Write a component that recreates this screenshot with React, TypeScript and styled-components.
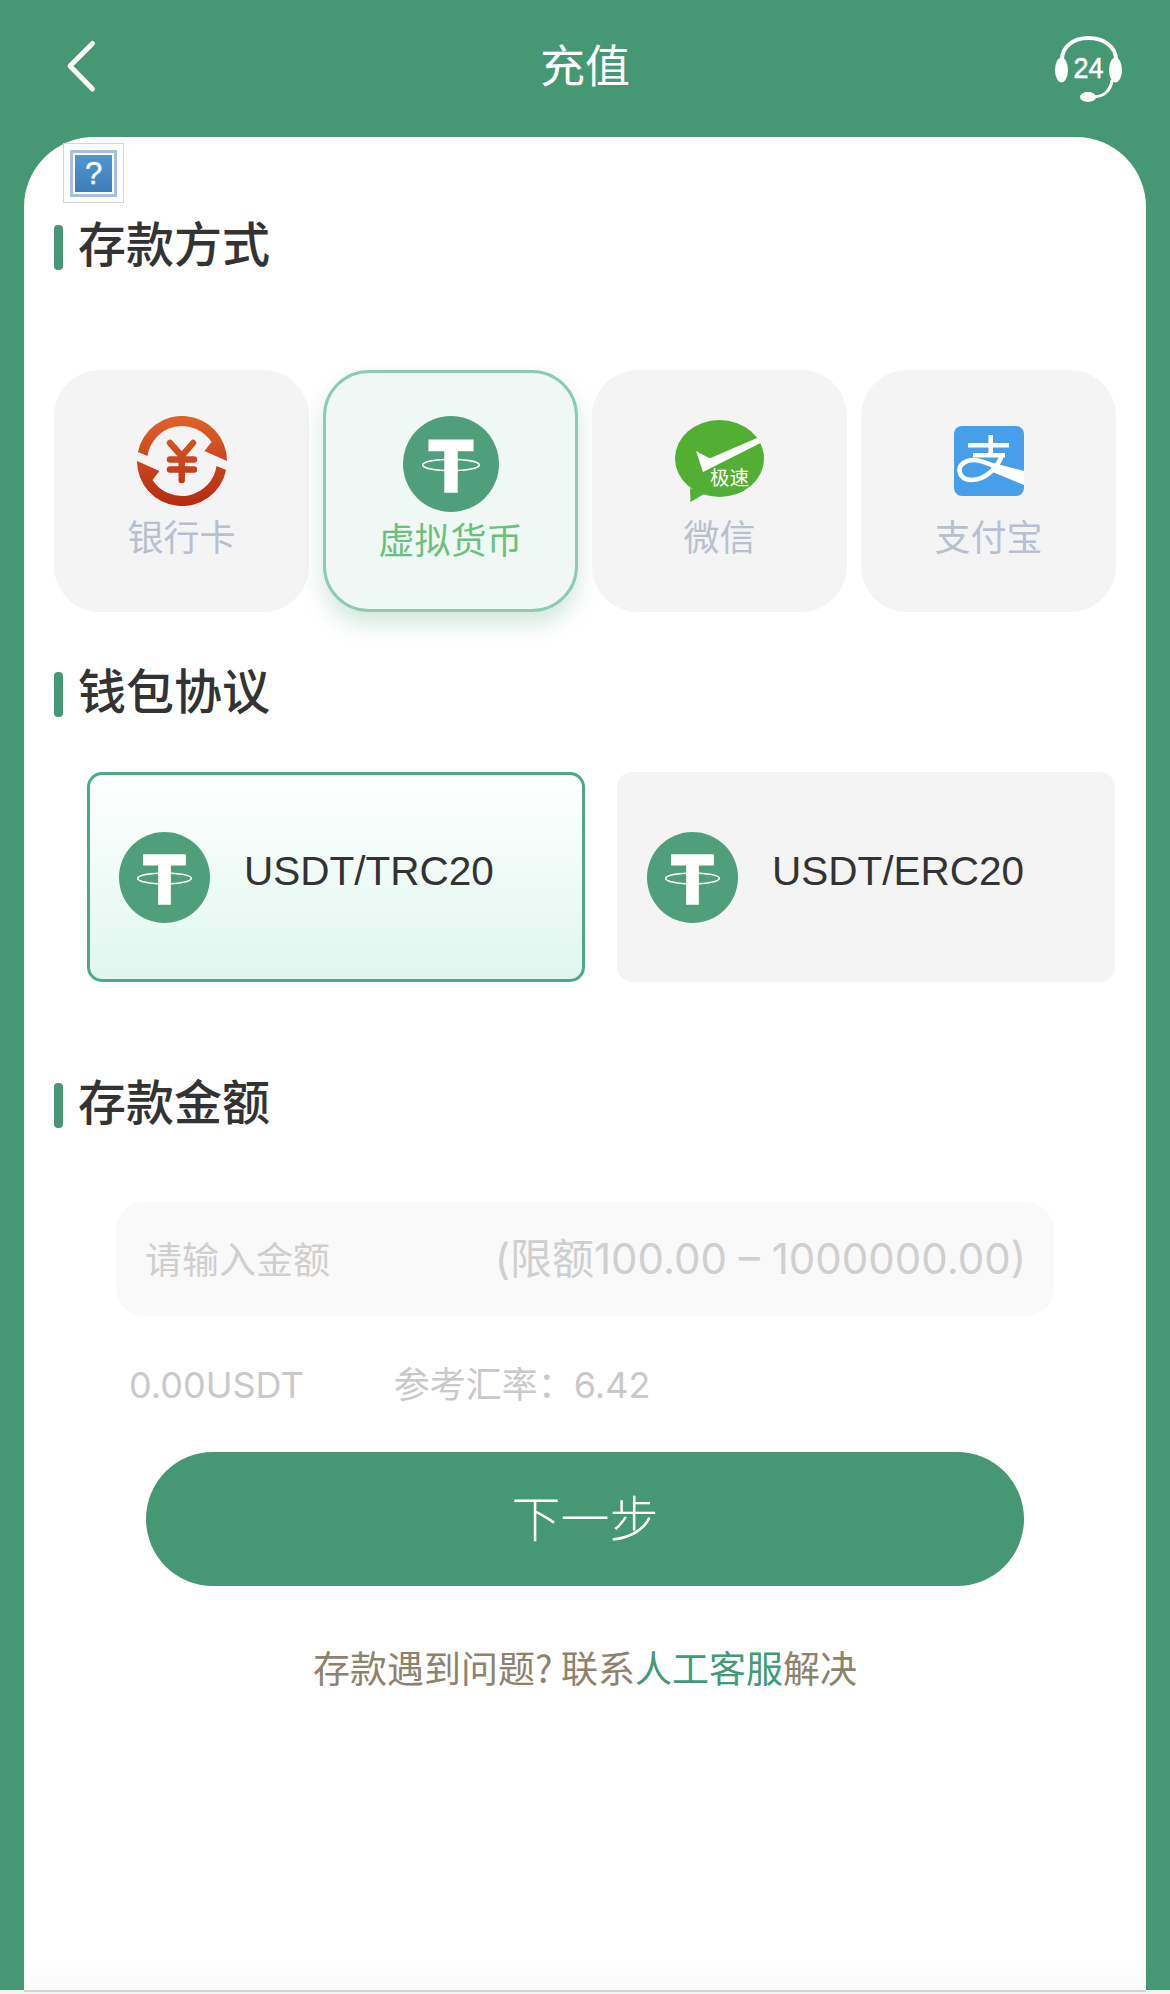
import React from "react";
import styled, { createGlobalStyle } from "styled-components";

const CJK = `"Noto Sans CJK SC", sans-serif`;
const LATIN = `"Liberation Sans", "Noto Sans CJK SC", sans-serif`;
const DIGITS = `Inter, "Noto Sans CJK SC", sans-serif`;
const GREEN = "#459873";

const GlobalStyle = createGlobalStyle`
  html, body {
    margin: 0;
    padding: 0;
    background: #fff;
  }
  * {
    box-sizing: border-box;
  }
`;

const Page = styled.div`
  width: 1170px;
  height: 1994px;
  display: flex;
  flex-direction: column;
  background: ${GREEN};
  font-family: ${CJK};
`;

const Header = styled.header`
  flex: none;
  height: 137px;
  padding: 0 48px 5px;
  display: grid;
  grid-template-columns: 1fr auto 1fr;
  align-items: center;
  color: #fff;
`;

const BackButton = styled.button`
  justify-self: start;
  width: 32px;
  height: 54px;
  margin-left: 18px;
  padding: 0;
  border: 0;
  background: none;
  display: block;
`;

const HeaderTitle = styled.h1`
  margin: 0 0 5px;
  font-size: 45px;
  line-height: 60px;
  font-weight: 400;
`;

const ServiceButton = styled.button`
  justify-self: end;
  width: 67px;
  height: 66px;
  margin-top: 6px;
  padding: 0;
  border: 0;
  background: none;
  display: block;
`;

const Sheet = styled.main`
  flex: 1;
  margin: 0 24px;
  padding: 6px 30px 0;
  border-radius: 70px 70px 0 0;
  background: linear-gradient(#fff calc(100% - 32px), #fafafa);
`;

/* the little placeholder the webview paints for a banner that failed to load */
const MissingImage = styled.div`
  width: 61px;
  height: 60px;
  margin-left: 9px;
  padding: 6px;
  border: 1px solid #d6d6d6;
  background: #fff;
`;

const MissingFrame = styled.div`
  width: 47px;
  height: 47px;
  padding: 2px;
  border: 3px solid #a9bddc;
  background: #fff;
`;

const MissingTile = styled.div`
  height: 37px;
  display: flex;
  align-items: center;
  justify-content: center;
  background: linear-gradient(#4f96d2, #3c7db6);
  color: #fff;
  font-family: ${LATIN};
  font-size: 31px;
  line-height: 1;
  -webkit-text-stroke: 0.5px #fff;
`;

const SectionTitle = styled.h2<{ $top: number }>`
  margin: ${(p) => p.$top}px 0 0;
  height: 46px;
  display: flex;
  align-items: flex-start;
  gap: 15px;
  color: #333;
  font-size: 48px;
  line-height: 32px;
  font-weight: 500;

  &::before {
    content: "";
    flex: none;
    width: 9px;
    height: 45px;
    border-radius: 4px;
    background: ${GREEN};
  }
`;

const MethodRow = styled.div`
  margin-top: 99px;
  display: grid;
  grid-template-columns: repeat(4, 255px);
  column-gap: 14px;
`;

const MethodTile = styled.div<{ $active?: boolean }>`
  height: 242px;
  padding-top: 43px;
  display: flex;
  flex-direction: column;
  align-items: center;
  border: 3px solid ${(p) => (p.$active ? "#8bcbb2" : "transparent")};
  border-radius: 46px;
  background: ${(p) => (p.$active ? "#eff8f5" : "#f4f4f4")};
  box-shadow: ${(p) => (p.$active ? "0 12px 22px rgba(70, 153, 116, 0.24)" : "none")};
`;

const MethodIcon = styled.div<{ $active?: boolean }>`
  height: ${(p) => (p.$active ? 95 : 90)}px;
  display: flex;
  align-items: center;
  justify-content: center;
`;

const MethodLabel = styled.span<{ $active?: boolean }>`
  margin-top: ${(p) => (p.$active ? 6 : 8)}px;
  color: ${(p) => (p.$active ? "#6cc07d" : "#b8c0d0")};
  font-size: 36px;
  line-height: 42px;
`;

const WalletRow = styled.div`
  margin: 54px 0 0 33px;
  display: grid;
  grid-template-columns: 498px 498px;
  column-gap: 32px;
`;

const WalletCard = styled.div<{ $active?: boolean }>`
  height: 210px;
  padding-left: ${(p) => (p.$active ? 29 : 30)}px;
  display: flex;
  align-items: center;
  gap: 34px;
  border: ${(p) => (p.$active ? "3px solid #4ea883" : "0")};
  border-radius: 15px;
  background: ${(p) => (p.$active ? "linear-gradient(#fff, #dff7ee)" : "#f4f4f4")};
`;

const WalletName = styled.span`
  margin-bottom: 12px;
  color: #333;
  font-family: ${LATIN};
  font-size: 40.5px;
  line-height: 46px;
`;

const AmountBox = styled.div`
  margin: 73px 62px 0;
  height: 114px;
  padding: 0 28px 2px 29px;
  display: flex;
  align-items: center;
  border-radius: 28px;
  background: #f9f9f9;
`;

const AmountInput = styled.input`
  flex: 1;
  min-width: 0;
  border: 0;
  outline: 0;
  padding: 0;
  background: none;
  font-family: ${CJK};
  font-size: 37px;

  &::placeholder {
    color: #cfcfcf;
    opacity: 1;
  }
`;

const AmountLimit = styled.span`
  margin-top: 2px;
  color: #cfcfcf;
  font-family: ${DIGITS};
  font-size: 42px;
  line-height: 48px;
  white-space: nowrap;
`;

const RateRow = styled.div`
  margin: 48px 0 0 75px;
  display: flex;
  gap: 90px;
  color: #c9c9c9;
  font-family: ${DIGITS};
  font-size: 36px;
  line-height: 42px;
`;

const NextButton = styled.button`
  display: block;
  width: 878px;
  height: 134px;
  margin: 46px 0 0 92px;
  padding: 0 0 8px;
  border: 0;
  border-radius: 67px;
  background: ${GREEN};
  color: #fff;
  font-family: ${CJK};
  font-size: 49px;
  font-weight: 300;
`;

const HelpNote = styled.p`
  margin: 60px 0 0;
  text-align: center;
  color: #8e826c;
  font-size: 37px;
  line-height: 42px;
`;

const HelpLink = styled.a`
  color: #3f9b78;
`;

const BottomEdge = styled.div`
  flex: none;
  height: 4px;
  background: #f1f4f2;

  &::before {
    content: "";
    display: block;
    height: 2px;
    margin: 0 24px;
    background: #d2d2d2;
  }
`;

const BackIcon = () => (
  <svg width="32" height="54" viewBox="0 0 32 54" fill="none">
    <path d="M26.500 4.500 4 27 26.500 50" stroke="#fff" strokeWidth="5" strokeLinecap="round" strokeLinejoin="round" />
  </svg>
);

const HeadsetIcon = () => (
  <svg width="67" height="66" viewBox="0 0 67 66" fill="none">
    <path d="M7 24C7 10 19 2 33.500 2S61 10 61 24" stroke="#fff" strokeWidth="4" />
    <ellipse cx="6.500" cy="34" rx="6.500" ry="12.500" fill="#fff" />
    <ellipse cx="60.500" cy="34" rx="6.500" ry="12.500" fill="#fff" />
    <path d="M57 44C56 54 49 61 38 61" stroke="#fff" strokeWidth="3" />
    <ellipse cx="33" cy="61" rx="8" ry="5" fill="#fff" />
    <text
      x="33.500"
      y="41.500"
      textAnchor="middle"
      textLength="30"
      lengthAdjust="spacingAndGlyphs"
      fill="#fff"
      stroke="#fff"
      strokeWidth="0.600"
      fontFamily="Liberation Sans"
      fontSize="29"
    >
      24
    </text>
  </svg>
);

const BankIcon = () => (
  <svg width="90" height="90" viewBox="0 0 90 90" fill="none">
    <defs>
      <linearGradient id="bankFill" gradientUnits="userSpaceOnUse" x1="0" y1="0" x2="0" y2="90">
        <stop offset="0" stopColor="#e0622a" />
        <stop offset="1" stopColor="#b42a10" />
      </linearGradient>
    </defs>
    <path d="M.9 36A45 45 0 0 1 90 45L67.500 35 74.500 26A35 35 0 0 0 10.500 40Z" fill="url(#bankFill)" />
    <path d="M89.100 54A45 45 0 0 1 0 45L22.500 55 15.500 64A35 35 0 0 0 79.500 50Z" fill="url(#bankFill)" />
    <path
      d="M33 27 44.700 40 56 27M44.700 40V64M33 43.500H57M33 53.500H57"
      stroke="url(#bankFill)"
      strokeWidth="6.400"
      strokeLinecap="round"
      strokeLinejoin="round"
    />
  </svg>
);

const TetherIcon = ({ size }: { size: number }) => (
  <svg width={size} height={size} viewBox="0 0 100 100">
    <circle cx="50" cy="50" r="50" fill="#4f9f7c" />
    <path d="M26.500 24.500H73.500V36.700H57V80H43V36.700H26.500Z" fill="#fff" />
    <ellipse cx="50" cy="51" rx="29.500" ry="6" fill="none" stroke="#fff" strokeWidth="1.700" />
  </svg>
);

const WechatIcon = () => (
  <svg width="89" height="83" viewBox="0 0 89 83">
    <ellipse cx="44.500" cy="38.500" rx="44.500" ry="38.500" fill="#52af32" />
    <path d="M15 68 15.500 82 29 74Z" fill="#52af32" />
    <path d="M21 31 33 37.500Q35 38.500 38 37L82 18 85.500 23 28 52Z" fill="#fff" />
    <text x="35" y="65" fill="#fff" fontFamily="Noto Sans CJK SC" fontSize="19.500">
      极速
    </text>
  </svg>
);

const AlipayIcon = () => (
  <svg width="70" height="70" viewBox="0 0 70 70" fill="none">
    <defs>
      <clipPath id="alipayTile">
        <rect width="70" height="70" rx="8" />
      </clipPath>
    </defs>
    <g clipPath="url(#alipayTile)">
      <rect width="70" height="70" fill="#469fe8" />
      <path d="M36.700 9V29M14 19.300H55M19 29.300H51" stroke="#fff" strokeWidth="4.500" />
      <path
        d="M48 29C44 41 32 54 17 54 9.500 54 5.500 49 5.500 44 5.500 38 12 34 20 34 32 34 46 45 70 51"
        stroke="#fff"
        strokeWidth="4.600"
      />
      <path d="M40 37 70 45V59L36 45Z" fill="#fff" />
    </g>
  </svg>
);

const App = () => (
  <Page>
    <GlobalStyle />
    <Header>
      <BackButton aria-label="返回">
        <BackIcon />
      </BackButton>
      <HeaderTitle>充值</HeaderTitle>
      <ServiceButton aria-label="客服">
        <HeadsetIcon />
      </ServiceButton>
    </Header>

    <Sheet>
      <MissingImage>
        <MissingFrame>
          <MissingTile>?</MissingTile>
        </MissingFrame>
      </MissingImage>

      <SectionTitle $top={22}>存款方式</SectionTitle>
      <MethodRow>
        <MethodTile>
          <MethodIcon>
            <BankIcon />
          </MethodIcon>
          <MethodLabel>银行卡</MethodLabel>
        </MethodTile>
        <MethodTile $active>
          <MethodIcon $active>
            <TetherIcon size={96} />
          </MethodIcon>
          <MethodLabel $active>虚拟货币</MethodLabel>
        </MethodTile>
        <MethodTile>
          <MethodIcon>
            <WechatIcon />
          </MethodIcon>
          <MethodLabel>微信</MethodLabel>
        </MethodTile>
        <MethodTile>
          <MethodIcon>
            <AlipayIcon />
          </MethodIcon>
          <MethodLabel>支付宝</MethodLabel>
        </MethodTile>
      </MethodRow>

      <SectionTitle $top={60}>钱包协议</SectionTitle>
      <WalletRow>
        <WalletCard $active>
          <TetherIcon size={91} />
          <WalletName>USDT/TRC20</WalletName>
        </WalletCard>
        <WalletCard>
          <TetherIcon size={91} />
          <WalletName>USDT/ERC20</WalletName>
        </WalletCard>
      </WalletRow>

      <SectionTitle $top={101}>存款金额</SectionTitle>
      <AmountBox>
        <AmountInput placeholder="请输入金额" />
        <AmountLimit>(限额100.00 – 1000000.00)</AmountLimit>
      </AmountBox>
      <RateRow>
        <span>0.00USDT</span>
        <span>参考汇率：6.42</span>
      </RateRow>
      <NextButton>下一步</NextButton>
      <HelpNote>
        存款遇到问题? 联系<HelpLink>人工客服</HelpLink>解决
      </HelpNote>
    </Sheet>
    <BottomEdge />
  </Page>
);

export default App;
